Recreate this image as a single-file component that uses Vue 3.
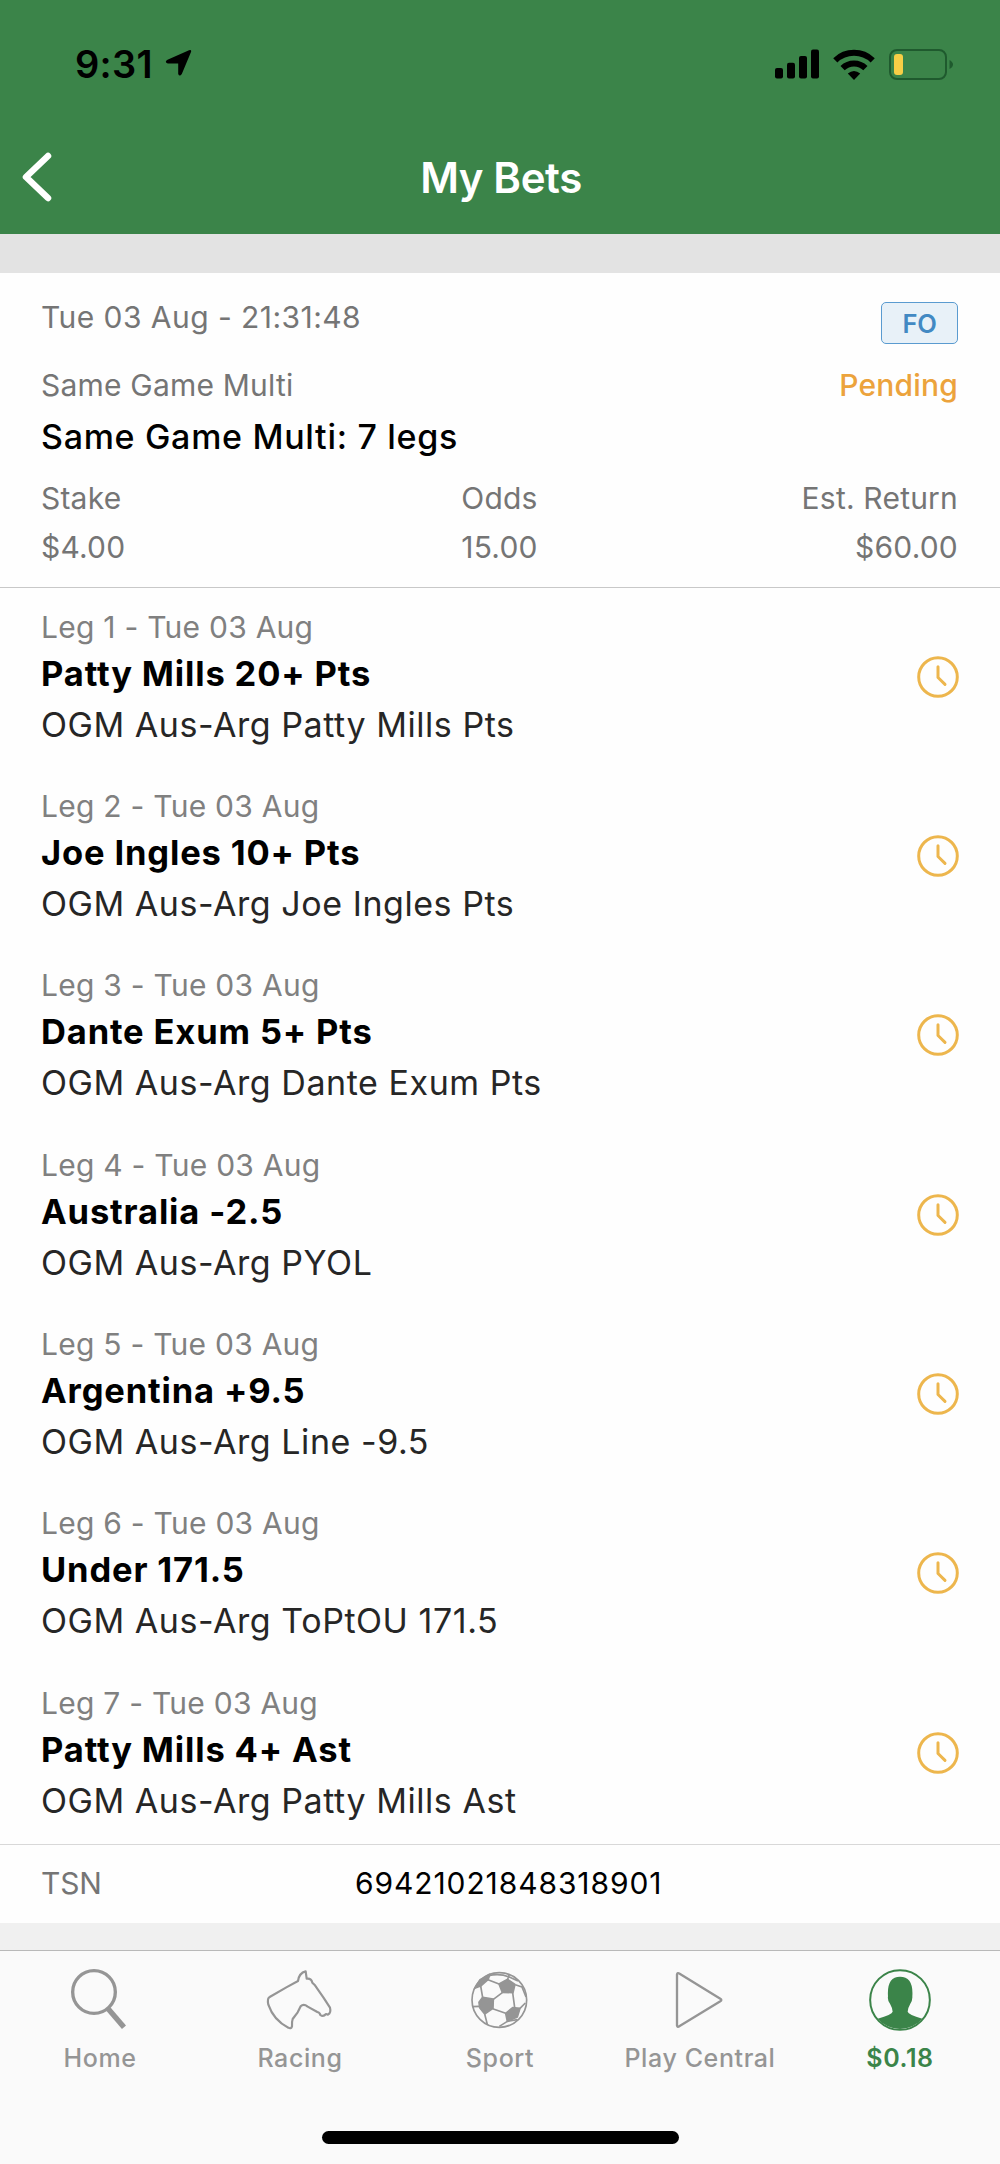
<template>
  <div class="screen">
    <header class="header">
      <div class="status-bar">
        <div class="status-left">
          <span class="time">9:31</span>
          <svg class="location" viewBox="0 0 27 28" width="27" height="28">
            <path d="M2.5 10.8 L24 1.2 Q26.8 0.4 26 3 L16.8 25 Q14.6 28 13.2 25 V14.4 H2.8 Q-1 13 2.5 10.8 Z" />
          </svg>
        </div>
        <div class="status-right">
          <svg viewBox="0 0 44 30" width="44" height="30">
            <rect x="0" y="19" width="8" height="10.5" rx="2" />
            <rect x="12" y="13.7" width="8" height="15.8" rx="2" />
            <rect x="24" y="7" width="8" height="22.5" rx="2" />
            <rect x="36" y="0.5" width="8" height="29" rx="2" />
          </svg>
          <svg class="wifi" viewBox="0 0 42 31" width="42" height="31">
            <path d="M2.3 11.3 A27 27 0 0 1 39.7 11.3" />
            <path d="M9.6 19.2 A16.3 16.3 0 0 1 32.4 19.2" />
            <path class="dot" d="M14.8 24.6 Q21 19.4 27.2 24.6 L21 31 Z" />
          </svg>
          <svg class="battery" viewBox="0 0 65 31" width="65" height="31">
            <rect class="case" x="1" y="1" width="56" height="29" rx="7" />
            <path class="cap" d="M60.5 11 Q64 13 64 15.5 Q64 18 60.5 20 Z" />
            <rect class="level" x="5" y="5" width="9" height="21" rx="3" />
          </svg>
        </div>
      </div>
      <div class="nav">
        <button class="back">
          <svg viewBox="0 0 30 50" width="30" height="50">
            <path d="M26 4 L4 25 L26 46" />
          </svg>
        </button>
        <h1>My Bets</h1>
      </div>
    </header>

    <main class="bet">
      <section class="summary">
        <div class="row top">
          <span class="date">Tue 03 Aug - 21:31:48</span>
          <span class="badge">FO</span>
        </div>
        <div class="row type">
          <span>Same Game Multi</span>
          <span class="pending">Pending</span>
        </div>
        <h2>Same Game Multi: 7 legs</h2>
        <dl class="amounts">
          <div v-for="item in amounts" :key="item.label">
            <dt>{{ item.label }}</dt>
            <dd>{{ item.value }}</dd>
          </div>
        </dl>
      </section>

      <ul class="legs">
        <li v-for="(leg, i) in legs" :key="i">
          <div>
            <div class="leg-date">Leg {{ i + 1 }} - Tue 03 Aug</div>
            <div class="leg-pick">{{ leg.pick }}</div>
            <div class="leg-market">OGM Aus-Arg {{ leg.market }}</div>
          </div>
          <svg class="clock" viewBox="0 0 42 42" width="42" height="42">
            <circle cx="21" cy="21" r="19.3" />
            <path d="M21 10.8 V21.5 L28 28.4" />
          </svg>
        </li>
      </ul>

      <div class="tsn">
        <span class="tsn-label">TSN</span>
        <span class="tsn-number">69421021848318901</span>
      </div>
    </main>

    <nav class="tabs">
      <a v-for="tab in tabs" :key="tab.name" href="#" :class="{ active: tab.name === activeTab }" @click.prevent="activeTab = tab.name">
        <svg viewBox="0 0 192 192" width="64" height="64">
          <g v-if="tab.name === 'home'">
            <circle cx="78" cy="75" r="64" stroke-width="10" />
            <path d="M121 126 L168 181" stroke-width="16" />
          </g>
          <g v-else-if="tab.name === 'racing'" stroke-width="6.5">
            <path d="M113 13 L116 35 Q130 33 133 47 L141 55 L166 91 L186 122 Q190 137 180 143 L174 141 Q166 151 157 144 Q156 137 148 135 L119 119 Q107 109 98 118 L89 136 L74 156 Q71 165 72 178 Q69 187 61 182 Q17 160 1 113 Q-3 94 5 90 L55 61 L90 42 Q93 18 113 13 Z" />
          </g>
          <g v-else-if="tab.name === 'sport'" stroke-width="5">
            <circle cx="94" cy="99" r="82" />
            <path class="fill" d="M93 51 L119 37 L141 52 L135 77 L103 76 Z M44 91 L76 96 L75 124 L50 141 L35 122 L33 106 Z M113 139 L134 122 L156 124 L148 150 L118 163 Z M20 64 L36 38 L66 22 L60 38 L38 57 Z" />
            <path d="M103 77 L76 97 M93 51 L60 38 M38 57 L44 92 M134 77 L140 122 M74 125 L113 139 M50 141 L58 172 M142 53 L162 60 L174 90 M119 37 L124 22 M62 26 Q94 18 124 30 L150 42 M14 119 L33 118 M118 163 L94 178 M156 124 L172 108 M118 163 L148 158" />
          </g>
          <g v-else-if="tab.name === 'play'" stroke-width="7">
            <path d="M27 22 Q28 16 35 20 L157 95 Q163 99 157 103 L35 177 Q28 182 27 176 Z" />
          </g>
          <g v-else stroke-width="6">
            <circle cx="96" cy="99" r="89.5" />
            <path class="fill solid" d="M29 155 Q72 143 74 134 Q74 124 66 110 Q58 100 60 88 Q56 29 96 29 Q137 29 133 88 Q134 100 127 110 Q119 124 119 134 Q121 143 163 155 A88 88 0 0 1 29 155 Z" />
          </g>
        </svg>
        <span>{{ tab.label }}</span>
      </a>
      <div class="home-indicator"></div>
    </nav>
  </div>
</template>

<script setup>
import { ref } from 'vue';

const activeTab = ref('account');

const amounts = [
  { label: 'Stake', value: '$4.00' },
  { label: 'Odds', value: '15.00' },
  { label: 'Est. Return', value: '$60.00' },
];

const legs = [
  { pick: 'Patty Mills 20+ Pts', market: 'Patty Mills Pts' },
  { pick: 'Joe Ingles 10+ Pts', market: 'Joe Ingles Pts' },
  { pick: 'Dante Exum 5+ Pts', market: 'Dante Exum Pts' },
  { pick: 'Australia -2.5', market: 'PYOL' },
  { pick: 'Argentina +9.5', market: 'Line -9.5' },
  { pick: 'Under 171.5', market: 'ToPtOU 171.5' },
  { pick: 'Patty Mills 4+ Ast', market: 'Patty Mills Ast' },
];

const tabs = [
  { name: 'home', label: 'Home' },
  { name: 'racing', label: 'Racing' },
  { name: 'sport', label: 'Sport' },
  { name: 'play', label: 'Play Central' },
  { name: 'account', label: '$0.18' },
];
</script>

<style>
body {
  margin: 0;
  background: #f0f0f0;
}
</style>

<style scoped>
.screen {
  width: 1000px;
  height: 2164px;
  display: flex;
  flex-direction: column;
  overflow: hidden;
  background: #f0f0f0;
  font-family: Inter, "Liberation Sans", sans-serif;
  font-size: 30px;
  letter-spacing: 0.2px;
  color: #757575;
}

.header {
  height: 234px;
  background: #3b8449;
}

.status-bar {
  box-sizing: border-box;
  height: 120px;
  padding: 8px 46px 0 75px;
  display: flex;
  align-items: center;
  justify-content: space-between;
}

.status-left,
.status-right {
  display: flex;
  align-items: center;
}

.status-left {
  gap: 12px;
  color: #000;
}

.status-right {
  gap: 14px;
}

.time {
  font-size: 38px;
  font-weight: 600;
  letter-spacing: 0.3px;
}

.location {
  margin-top: -2px;
}

.wifi path {
  fill: none;
  stroke: #000;
  stroke-width: 6;
}

.wifi .dot {
  fill: #000;
  stroke: none;
}

.battery .case {
  fill: none;
  stroke: #1f5a2e;
  stroke-width: 2;
}

.battery .cap {
  fill: #1f5a2e;
}

.battery .level {
  fill: #f7ce46;
}

.nav {
  height: 114px;
  padding: 0 22px;
  display: grid;
  grid-template-columns: 100px 1fr 100px;
  align-items: center;
}

.back {
  display: flex;
  padding: 0;
  border: none;
  background: none;
}

.back path {
  fill: none;
  stroke: #fff;
  stroke-width: 6.5;
  stroke-linecap: round;
  stroke-linejoin: round;
}

h1 {
  margin: 0;
  padding-left: 2px;
  text-align: center;
  font-size: 42px;
  font-weight: 600;
  letter-spacing: -0.4px;
  color: #fff;
}

.bet {
  height: 1650px;
  border-top: 39px solid #e3e3e3;
  background: #fefefe;
}

.summary {
  box-sizing: border-box;
  height: 315px;
  padding: 29px 42px 0 41px;
  border-bottom: 1px solid #c8c8c8;
}

.row {
  display: flex;
  justify-content: space-between;
}

.top {
  height: 42px;
  line-height: 30px;
}

.date {
  letter-spacing: 0.45px;
}

.type {
  margin-top: 21px;
  line-height: 40px;
}

.badge {
  box-sizing: border-box;
  width: 77px;
  height: 42px;
  border: 1.5px solid #5a9bd0;
  border-radius: 5px;
  background: #e8f1f8;
  color: #4289c3;
  font-size: 25.5px;
  font-weight: 600;
  letter-spacing: -0.4px;
  line-height: 41px;
  text-align: center;
}

.pending {
  color: #eca33c;
  font-weight: 500;
}

h2 {
  margin: 10px 0 0;
  font-size: 34px;
  line-height: 44px;
  font-weight: 500;
  letter-spacing: 0.7px;
  color: #000;
}

.amounts {
  margin: 19px 0 0;
  display: grid;
  grid-template-columns: 1fr 1fr 1fr;
  line-height: 40px;
  text-align: center;
}

.amounts div:first-child {
  text-align: left;
}

.amounts div:last-child {
  text-align: right;
}

dd {
  margin: 9px 0 0;
}

.legs {
  margin: 0;
  padding: 0;
  list-style: none;
  border-bottom: 1px solid #d8d8d8;
}

.legs li {
  box-sizing: border-box;
  height: 179.4px;
  padding: 18.5px 41px 0;
  display: flex;
  justify-content: space-between;
}

.leg-date {
  line-height: 40px;
  letter-spacing: 0.25px;
  color: #808080;
}

.leg-pick {
  margin-top: 5px;
  font-size: 34.5px;
  line-height: 44px;
  font-weight: 700;
  letter-spacing: 0.85px;
  color: #000;
}

.leg-market {
  margin-top: 7px;
  font-size: 34px;
  line-height: 44px;
  letter-spacing: 0.55px;
  color: #262626;
}

.clock {
  margin-top: 49px;
  fill: none;
  stroke: #edb64d;
  stroke-width: 3;
  stroke-linecap: round;
  stroke-linejoin: round;
}

.tsn {
  height: 77px;
  padding: 0 42px 0 41px;
  display: grid;
  grid-template-columns: 314px 1fr;
  align-items: center;
}

.tsn-label {
  letter-spacing: -0.2px;
}

.tsn-number {
  letter-spacing: 0.9px;
  color: #000;
}

.tabs {
  box-sizing: border-box;
  height: 214px;
  margin-top: 27px;
  padding-top: 16px;
  border-top: 1px solid #b9b9b9;
  background: #fafafa;
  display: grid;
  grid-template-columns: repeat(5, 200px);
  grid-template-rows: 1fr auto;
}

.tabs a {
  display: flex;
  flex-direction: column;
  align-items: center;
  color: #959595;
  font-size: 25px;
  font-weight: 500;
  letter-spacing: 0.6px;
  line-height: 32px;
  text-decoration: none;
}

.tabs a.active {
  color: #3b8449;
  font-weight: 600;
}

.tabs svg {
  margin-bottom: 11px;
  overflow: visible;
  fill: none;
  stroke: currentColor;
  stroke-linejoin: round;
}

.tabs .fill {
  fill: currentColor;
}

.tabs .solid {
  stroke: none;
}

.home-indicator {
  grid-column: 1 / -1;
  justify-self: center;
  width: 357px;
  height: 13px;
  margin-bottom: 20px;
  border-radius: 7px;
  background: #000;
}
</style>
